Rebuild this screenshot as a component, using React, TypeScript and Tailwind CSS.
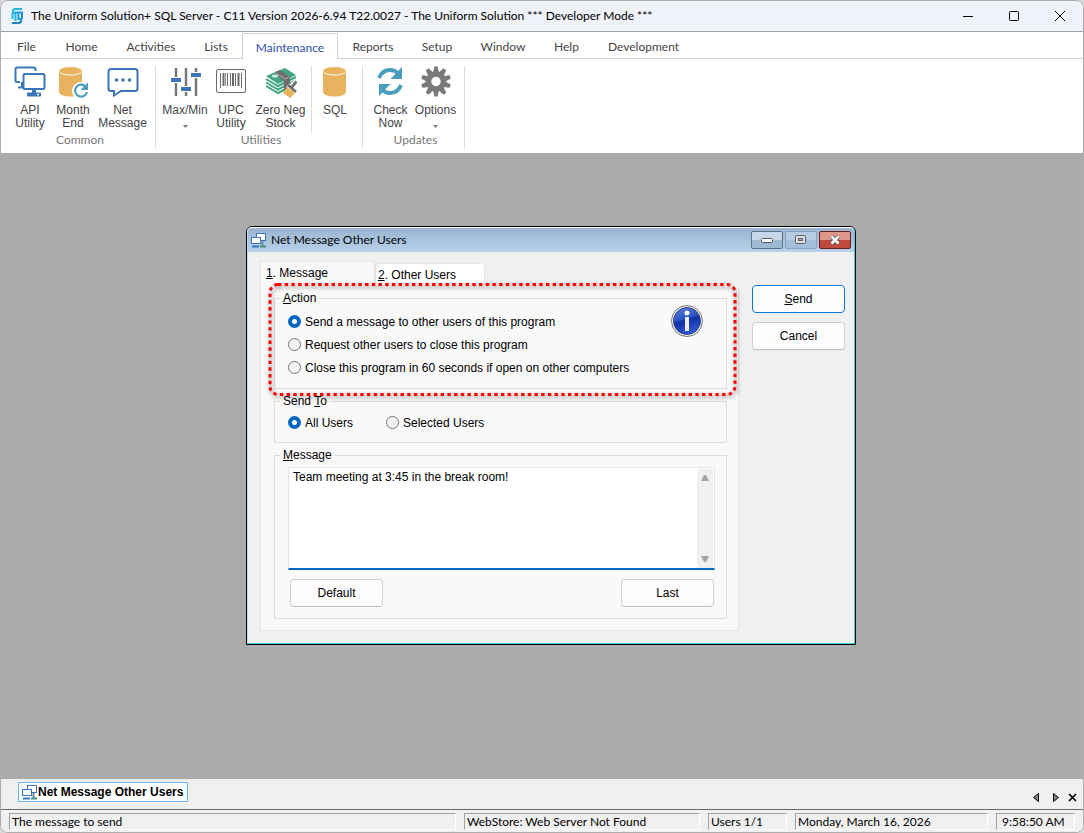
import React, { useState } from "react";
import clsx from "clsx";

const menuTabs = [
  { label: "File", width: "w-[49px]" },
  { label: "Home", width: "w-[61px]" },
  { label: "Activities", width: "w-[78px]" },
  { label: "Lists", width: "w-[52px]" },
  { label: "Maintenance", width: "w-24" },
  { label: "Reports", width: "w-[70px]" },
  { label: "Setup", width: "w-[58px]" },
  { label: "Window", width: "w-[74px]" },
  { label: "Help", width: "w-[53px]" },
  { label: "Development", width: "w-[101px]" },
];

const actions = [
  "Send a message to other users of this program",
  "Request other users to close this program",
  "Close this program in 60 seconds if open on other computers",
];

// Ribbon icons, all on a 32px grid
function ApiIcon() {
  return (
    <svg width="32" height="32" viewBox="0 0 32 32" fill="none" stroke="#3a76b8" strokeWidth="2">
      <path d="M6 16H3a1.500 1.500 0 0 1-1.500-1.500V3A1.500 1.500 0 0 1 3 1.500h17A1.500 1.500 0 0 1 21.500 3v2" />
      <path d="M8 16v5M4 21.500h5" />
      <rect x="9.500" y="8" width="21" height="15" rx="1.500" />
      <path d="M20 23v4" strokeWidth="4" />
      <rect x="13" y="26.500" width="14" height="4" rx="1" fill="#3a76b8" stroke="none" />
      <circle cx="24" cy="28.500" r="1" fill="#fff" stroke="none" />
    </svg>
  );
}

function Cylinder() {
  return (
    <>
      <path d="M4 5v21c0 2.500 5 4.500 11.500 4.500S27 28.500 27 26V5z" fill="#e8b35f" />
      <ellipse cx="15.500" cy="5" rx="11.500" ry="4" fill="#e8b35f" />
      <path d="M4.500 5.500c1 2.300 5 3.500 11 3.500s10-1.200 11-3.500" fill="none" stroke="#fff" />
    </>
  );
}

function MonthEndIcon() {
  return (
    <svg width="32" height="32" viewBox="0 0 32 32">
      <g transform="translate(-2 0)">
        <Cylinder />
      </g>
      <circle cx="24" cy="25" r="9" fill="#fff" />
      <path d="M28.500 20.500A6 6 0 1 0 30 26" fill="none" stroke="#4a9dbd" strokeWidth="2.200" />
      <path d="M31 16.500v7.500h-7.500z" fill="#4a9dbd" />
    </svg>
  );
}

function NetMessageIcon() {
  return (
    <svg width="32" height="32" viewBox="0 0 32 32" fill="none">
      <path
        d="M4 3h24a2.500 2.500 0 0 1 2.500 2.500v17A2.500 2.500 0 0 1 28 25H14l-7 4.500V25H4a2.500 2.500 0 0 1-2.500-2.500v-17A2.500 2.500 0 0 1 4 3z"
        stroke="#3a76b8"
        strokeWidth="2"
      />
      <circle cx="9.500" cy="14" r="1.800" fill="#3a76b8" />
      <circle cx="16" cy="14" r="1.800" fill="#3a76b8" />
      <circle cx="22.500" cy="14" r="1.800" fill="#3a76b8" />
    </svg>
  );
}

function MaxMinIcon() {
  return (
    <svg width="32" height="32" viewBox="0 0 32 32">
      <path d="M7 2v28M17 2v28M27 2v28" stroke="#797979" strokeWidth="2.500" />
      <path d="M1 14h12M11 23h12M21 9h12" stroke="#fff" strokeWidth="6" />
      <path d="M2 14h10M12 23h10M22 9h10" stroke="#3a76b8" strokeWidth="4" />
    </svg>
  );
}

function BarcodeIcon() {
  return (
    <svg width="32" height="32" viewBox="0 0 32 32" fill="none" stroke="#6b6b6b">
      <rect x="1.500" y="3.500" width="29" height="23" rx="1.500" />
      <path d="M5.500 7v15M12.500 7v13M15.500 7v13M20.500 7v13M26.500 7v15" />
      <path d="M8.500 7v13M18 7v13M23.500 7v13" strokeWidth="2" />
      <path d="M10.500 7v13" strokeWidth="0.700" />
    </svg>
  );
}

function ZeroStockIcon() {
  return (
    <svg width="32" height="32" viewBox="0 0 32 32">
      <path d="M1 10l19-8 11 7-18 9z" fill="#42a583" />
      <g fill="none" stroke="#42a583" strokeWidth="2">
        <path d="M1 13l12 7 18-9" />
        <path d="M1 16.500l12 7 18-9" />
        <path d="M1 20l12 7 8-4" />
      </g>
      <ellipse cx="10" cy="10" rx="3" ry="1.500" fill="#d5eee4" />
      <path d="M10 6l5-2 10 7v10l-6 3v-8z" fill="#6e6e6e" />
      <path d="M11 7l9 6 4-2" fill="none" stroke="#b5b5b5" />
      <path d="M32 15l-5 5M23 19l8 8" stroke="#fff" strokeWidth="5" />
      <path d="M31.500 15.500l-5 6M23 19l8 7" stroke="#6e6e6e" strokeWidth="2.800" />
      <path d="M22 21l8 6-5 5-7-5z" fill="#e8b35f" />
    </svg>
  );
}

function SqlIcon() {
  return (
    <svg width="32" height="32" viewBox="0 0 32 32">
      <Cylinder />
    </svg>
  );
}

function CheckNowIcon() {
  return (
    <svg width="32" height="32" viewBox="0 0 32 32">
      <g fill="none" stroke="#4a9dbd">
        <path d="M4 12c2-5 6-8 11-8 3.500 0 6.500 1.500 8.500 4" strokeWidth="3.800" />
        <path d="M27 1v12H15.500z" fill="#4a9dbd" stroke="none" />
        <path d="M26 19c-2 5-6 8-11 8-3.500 0-6.500-1.500-8.500-4" strokeWidth="3.800" />
        <path d="M4 30V18h11.500z" fill="#4a9dbd" stroke="none" />
      </g>
    </svg>
  );
}

function OptionsIcon() {
  const teeth = [0, 36, 72, 108, 144, 180, 216, 252, 288, 324];
  return (
    <svg width="32" height="32" viewBox="0 0 32 32">
      <circle cx="16" cy="15.500" r="7.500" fill="none" stroke="#797979" strokeWidth="5.500" />
      {teeth.map((angle) => (
        <path key={angle} d="M13 7l1.300-6.500h3.400L19 7z" fill="#797979" transform={`rotate(${angle} 16 15.500)`} />
      ))}
    </svg>
  );
}

function WindowIcon() {
  return (
    <svg width="16" height="16" viewBox="0 0 16 16" fill="none" stroke="#3a76b8">
      <rect x="5.500" y="1.500" width="9" height="7" fill="#fff" />
      <rect x="0.500" y="5.500" width="9" height="6" fill="#fff" />
      <path d="M1 14.500h7" strokeWidth="2" />
      <path d="M11.500 9v5" stroke="#6b8f99" strokeWidth="2" />
      <path d="M9 14.500h6" stroke="#3f9277" strokeWidth="2" />
    </svg>
  );
}

function AppLogo() {
  return (
    <svg width="12" height="16" viewBox="0 0 12 16" fill="none" strokeWidth="2">
      <path d="M11 1H3.500L2 2.500V5M1 5h3.500v8" stroke="#20b6e4" />
      <path d="M1 15h7.500L10 13.500V11M11 11V5" stroke="#1b85c4" />
      <path d="M7.500 4v7H11M4 4.500h8" stroke="#1b9cd8" />
      <path d="M1.500 5v6" stroke="#20b6e4" />
    </svg>
  );
}

function InfoIcon() {
  return (
    <svg width="32" height="32" viewBox="0 0 32 32">
      <defs>
        <linearGradient id="info-fill" x1="0" y1="0" x2="0.300" y2="1">
          <stop offset="0" stopColor="#5c83dc" />
          <stop offset="0.500" stopColor="#2a52c4" />
          <stop offset="0.550" stopColor="#1231a4" />
          <stop offset="1" stopColor="#2c55d0" />
        </linearGradient>
      </defs>
      <circle cx="16" cy="16" r="15.500" fill="#f4f4f4" stroke="#777" />
      <circle cx="16" cy="16" r="13.500" fill="url(#info-fill)" stroke="#33427c" />
      <circle cx="16" cy="8" r="2.500" fill="#fff" />
      <rect x="14" y="12" width="4" height="14" rx="0.500" fill="#f0f0f0" />
    </svg>
  );
}

function RibbonButton({ icon, lines, width, dropdown = false }: { icon: React.ReactNode; lines: string[]; width: string; dropdown?: boolean }) {
  return (
    <button className={clsx("flex h-[66px] flex-col items-center whitespace-nowrap text-[12px] leading-[13px] text-[#444]", width)}>
      <span className="mb-[6px] block">{icon}</span>
      {lines.map((line) => (
        <span key={line}>{line}</span>
      ))}
      {dropdown && (
        <svg className="mt-2" width="5" height="3" viewBox="0 0 5 3" fill="#797979">
          <path d="M0 0h5L2.500 3z" />
        </svg>
      )}
    </button>
  );
}

function RibbonGroup({ title, children }: { title: string; children: React.ReactNode }) {
  return (
    <section className="flex flex-col border-r border-[#dcdcdc] px-1">
      <div className="flex">{children}</div>
      <div className="pl-1 text-center font-[Lato,sans-serif] text-[12px] leading-4 text-[#777]">{title}</div>
    </section>
  );
}

function Group({ legend, children }: { legend: React.ReactNode; children: React.ReactNode }) {
  return (
    <fieldset className="border border-[#dcdcdc]">
      <legend className="ml-[5px] px-[3px] leading-[14px]">{legend}</legend>
      {children}
    </fieldset>
  );
}

function Radio({ name, label, checked, onChange, className }: { name: string; label: string; checked: boolean; onChange: () => void; className?: string }) {
  return (
    <label className={clsx("flex h-[23px] items-center gap-1", className)}>
      <input
        type="radio"
        name={name}
        checked={checked}
        onChange={onChange}
        className="size-[13px] shrink-0 appearance-none rounded-full border border-[#767676] bg-[#f3f3f3] checked:border-4 checked:border-[#0067c0] checked:bg-white"
      />
      {label}
    </label>
  );
}

function PushButton({ children, primary = false }: { children: React.ReactNode; primary?: boolean }) {
  return (
    <button className={clsx("h-7 w-[93px] rounded-[4px] border bg-[#fdfdfd]", primary ? "border-[#0078d4]" : "border-[#d0d0d0] border-b-[#bcbcbc]")}>
      {children}
    </button>
  );
}

function NetMessageDialog() {
  const [action, setAction] = useState(0);
  const [sendTo, setSendTo] = useState("all");
  const [message, setMessage] = useState("Team meeting at 3:45 in the break room!");

  return (
    <div role="dialog" aria-label="Net Message Other Users" className="w-[610px] rounded-t-[6px] border border-black bg-[#f0f0f0] text-[12px] text-black">
      <div className="rounded-t-[5px] border border-t-white border-r-[#43c5ec] border-b-[#43c5ec] border-l-[#c5dcf2]">
        {/* Title bar */}
        <div className="flex h-6 items-center rounded-t-[4px] bg-linear-to-b from-[#99b4d1] to-[#b9d1ea] pl-[3px] font-[Lato,sans-serif]">
          <WindowIcon />
          <span className="ml-1 flex-1">Net Message Other Users</span>
          <div className="flex gap-[2px] pr-[3px]">
            <button aria-label="Minimize" className="flex h-[18px] w-8 items-center justify-center rounded-[2px] border border-[#5d7287] bg-linear-to-b from-[#c6d8ea] from-50% to-[#9fb9d3] to-50%">
              <svg width="12" height="6" viewBox="0 0 12 6">
                <rect x="0.500" y="1.500" width="11" height="4" rx="1" fill="#fff" stroke="#555b66" />
              </svg>
            </button>
            <button aria-label="Maximize" className="flex h-[18px] w-8 items-center justify-center rounded-[2px] border border-[#8ba2bb] bg-linear-to-b from-[#b5cce3] from-50% to-[#a4bfda] to-50%">
              <svg width="12" height="10" viewBox="0 0 12 10" fill="none" stroke="#5a6068">
                <rect x="0.500" y="0.500" width="10" height="8" rx="1" fill="#ddd" />
                <rect x="3.500" y="3.500" width="4" height="2" fill="#9db7d2" />
              </svg>
            </button>
            <button aria-label="Close" className="flex h-[18px] w-8 items-center justify-center rounded-[2px] border border-[#6b1c1c] bg-linear-to-b from-[#dc9788] from-50% to-[#bf4a3b] to-50%">
              <svg width="12" height="10" viewBox="0 0 12 10">
                <path d="M2.500 1.500l7 7M9.500 1.500l-7 7" stroke="#555b66" strokeWidth="4.500" />
                <path d="M2.500 1.500l7 7M9.500 1.500l-7 7" stroke="#fff" strokeWidth="2.500" />
              </svg>
            </button>
          </div>
        </div>

        <div className="flex gap-[13px] pt-[9px] pr-[9px] pb-3 pl-3">
          <div className="flex-1">
            {/* Tabs */}
            <div role="tablist" className="flex h-6 items-end">
              <button role="tab" aria-selected="true" className="h-6 w-[115px] border border-b-0 border-[#e5e5e5] bg-[#f9f9f9] pb-[2px] pl-[5px] text-left">
                <u>1</u>. Message
              </button>
              <button role="tab" aria-selected="false" className="h-[22px] w-[110px] rounded-t-[3px] border border-b-0 border-[#e5e5e5] bg-white pl-[2px] text-left">
                <u>2</u>. Other Users
              </button>
            </div>

            {/* Tab page */}
            <div className="relative flex flex-col gap-[5px] border border-t-0 border-[#e5e5e5] bg-[#f9f9f9] pt-[6px] pr-[11px] pb-[11px] pl-[13px]">
              <Group legend={<><u>A</u>ction</>}>
                <div className="flex items-start justify-between pr-[23px] pb-[9px] pl-[13px]">
                  <div className="pt-[5px]">
                    {actions.map((label, i) => (
                      <Radio key={label} name="action" label={label} checked={action === i} onChange={() => setAction(i)} />
                    ))}
                  </div>
                  <InfoIcon />
                </div>
              </Group>

              <Group legend={<>Send <u>T</u>o</>}>
                <div className="flex pt-[3px] pb-2 pl-[13px]">
                  <Radio className="w-[98px]" name="sendTo" label="All Users" checked={sendTo === "all"} onChange={() => setSendTo("all")} />
                  <Radio name="sendTo" label="Selected Users" checked={sendTo === "selected"} onChange={() => setSendTo("selected")} />
                </div>
              </Group>

              <Group legend={<label htmlFor="message"><u>M</u>essage</label>}>
                <div className="pt-[5px] pr-[11px] pb-[11px] pl-[13px]">
                  <div className="flex h-[103px] border border-b-2 border-[#e5e5e5] border-b-[#0067c0] bg-white">
                    <textarea
                      id="message"
                      value={message}
                      onChange={(e) => setMessage(e.target.value)}
                      className="flex-1 resize-none overflow-hidden px-1 pt-[2px] leading-[14px] outline-none"
                    />
                    <div className="mt-px mr-px flex w-4 flex-col items-center justify-between bg-[#f0f0f0] py-[6px]">
                      <svg width="8" height="6" viewBox="0 0 8 6" fill="#a3a3a3">
                        <path d="M3 0h2l3 6H0z" />
                      </svg>
                      <svg width="8" height="6" viewBox="0 0 8 6" fill="#a3a3a3">
                        <path d="M3 6h2l3-6H0z" />
                      </svg>
                    </div>
                  </div>
                  <div className="mt-[9px] flex justify-between pr-px pl-[2px]">
                    <PushButton>Default</PushButton>
                    <PushButton>Last</PushButton>
                  </div>
                </div>
              </Group>

              {/* Highlight around the action group */}
              <svg className="pointer-events-none absolute -top-[8px] left-0 overflow-visible drop-shadow-[1px_2px_2px_rgba(0,0,0,0.5)]" width="477" height="126" viewBox="0 0 477 126">
                <rect x="9" y="7.500" width="465" height="110" rx="8" fill="none" stroke="#ff0000" strokeWidth="3" strokeDasharray="3.400 3.300" />
              </svg>
            </div>
          </div>

          <div className="flex flex-col gap-[9px] pt-6">
            <PushButton primary><u>S</u>end</PushButton>
            <PushButton>Cancel</PushButton>
          </div>
        </div>
      </div>
    </div>
  );
}

function StatusCell({ children, className }: { children: React.ReactNode; className: string }) {
  return (
    <div className={clsx("h-[17px] overflow-hidden border border-[#a0a0a0] border-r-white border-b-white pl-[2px] leading-[15px] whitespace-nowrap", className)}>
      {children}
    </div>
  );
}

export default function App() {
  const [activeTab, setActiveTab] = useState("Maintenance");

  return (
    <div className="min-h-screen bg-[#d8d8d8] font-['Liberation_Sans',Arial,sans-serif]">
      <div className="flex min-h-screen flex-col overflow-hidden rounded-[8px] border border-[#adadad] bg-white">
        {/* Window title */}
        <header className="flex h-[31px] items-center border-b border-[#a0a0a5] bg-[#eff2f9] pl-[10px] font-[Lato,sans-serif] text-[12px] text-black">
          <AppLogo />
          <h1 className="ml-2 flex-1 whitespace-nowrap">
            The Uniform Solution+ SQL Server - C11 Version 2026-6.94 T22.0027 - The Uniform Solution *** Developer Mode ***
          </h1>
          <button aria-label="Minimize" className="flex h-full w-[46px] items-center justify-center">
            <svg width="10" height="10" viewBox="0 0 10 10" stroke="#000">
              <path d="M0 5.500h10" />
            </svg>
          </button>
          <button aria-label="Maximize" className="flex h-full w-[46px] items-center justify-center">
            <svg width="10" height="10" viewBox="0 0 10 10" fill="none" stroke="#000">
              <rect x="0.500" y="0.500" width="9" height="9" rx="1" />
            </svg>
          </button>
          <button aria-label="Close" className="flex h-full w-[46px] items-center justify-center">
            <svg width="10" height="10" viewBox="0 0 10 10" stroke="#000">
              <path d="M0 0l10 10M10 0L0 10" />
            </svg>
          </button>
        </header>

        {/* Menu tabs */}
        <nav className="flex h-[27px] border-b border-[#d2d2d2] pt-px pl-px font-[Lato,sans-serif] text-[12px] text-[#444]">
          {menuTabs.map((tab) => (
            <button
              key={tab.label}
              onClick={() => setActiveTab(tab.label)}
              className={clsx(
                "shrink-0 pt-[2px]",
                tab.width,
                activeTab === tab.label && "-mb-px border border-b-0 border-[#d2d2d2] bg-white text-[#2a50a8]"
              )}
            >
              {tab.label}
            </button>
          ))}
        </nav>

        {/* Ribbon */}
        <div className="flex h-[94px] pt-[7px] pb-[5px]">
          <RibbonGroup title="Common">
            <RibbonButton width="ml-1 w-[42px]" icon={<ApiIcon />} lines={["API", "Utility"]} />
            <RibbonButton width="w-11" icon={<MonthEndIcon />} lines={["Month", "End"]} />
            <RibbonButton width="mr-px w-[55px]" icon={<NetMessageIcon />} lines={["Net", "Message"]} />
          </RibbonGroup>
          <RibbonGroup title="Utilities">
            <RibbonButton width="w-[50px]" icon={<MaxMinIcon />} lines={["Max/Min"]} dropdown />
            <RibbonButton width="w-[42px]" icon={<BarcodeIcon />} lines={["UPC", "Utility"]} />
            <RibbonButton width="mr-[2px] w-[57px]" icon={<ZeroStockIcon />} lines={["Zero Neg", "Stock"]} />
            <div className="border-l border-[#dcdcdc]" />
            <RibbonButton width="w-[46px]" icon={<SqlIcon />} lines={["SQL"]} />
          </RibbonGroup>
          <RibbonGroup title="Updates">
            <RibbonButton width="ml-[3px] w-[41px]" icon={<CheckNowIcon />} lines={["Check", "Now"]} />
            <RibbonButton width="w-[49px]" icon={<OptionsIcon />} lines={["Options"]} dropdown />
          </RibbonGroup>
        </div>

        {/* MDI area */}
        <main className="flex-1 bg-[#ababab] pt-[73px] pl-[245px]">
          <NetMessageDialog />
        </main>

        {/* Open windows */}
        <div className="flex h-[31px] items-start justify-between border-b border-[#666b68] bg-[#f0f0f0] pr-[6px] pl-[17px]">
          <button className="mt-[3px] flex h-5 items-center border border-[#66b5f5] bg-white pr-1 pl-[3px] text-[12px] font-bold text-black">
            <WindowIcon />
            <span>Net Message Other Users</span>
          </button>
          <div className="mt-[14px] flex gap-3">
            <button aria-label="Previous window">
              <svg width="8" height="9" viewBox="0 0 8 9" fill="#808080" stroke="#000">
                <path d="M6.500 0.500v8L1.500 4.500z" />
              </svg>
            </button>
            <button aria-label="Next window">
              <svg width="8" height="9" viewBox="0 0 8 9" fill="#808080" stroke="#000">
                <path d="M1.500 0.500v8l5-4z" />
              </svg>
            </button>
            <button aria-label="Close window" className="-ml-1">
              <svg width="9" height="9" viewBox="0 0 9 9" stroke="#000" strokeWidth="1.700">
                <path d="M1 1l7 7M8 1L1 8" />
              </svg>
            </button>
          </div>
        </div>

        {/* Status bar */}
        <footer className="flex h-[22px] gap-2 bg-[#f0f0f0] pt-[3px] pr-2 pl-2 font-[Lato,sans-serif] text-[12px] text-black">
          <StatusCell className="flex-1">The message to send</StatusCell>
          <StatusCell className="w-[236px]">WebStore: Web Server Not Found</StatusCell>
          <StatusCell className="w-[79px]">Users 1/1</StatusCell>
          <StatusCell className="w-[193px]">Monday, March 16, 2026</StatusCell>
          <StatusCell className="w-[79px]">
            <span className="pl-[3px]">9:58:50 AM</span>
          </StatusCell>
        </footer>
      </div>
    </div>
  );
}
